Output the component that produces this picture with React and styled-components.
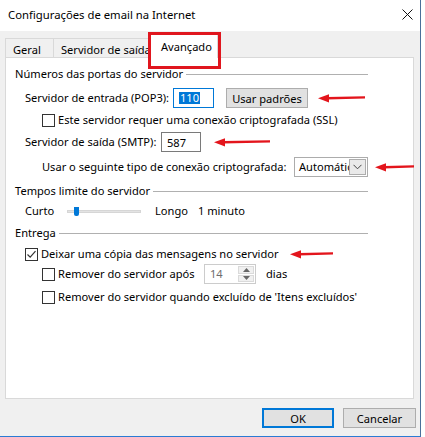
import React from "react"
import styled, { createGlobalStyle } from "styled-components"

const GlobalStyle = createGlobalStyle`
  html, body {
    margin: 0;
    padding: 0;
    background: #fff;
  }
  body {
    font-family: "Noto Sans", "Open Sans", sans-serif;
    font-size: 11.1px;
    color: #000;
  }
`

const RedArrow = ({ width, ml }) => (
  <ArrowSvg width={width} height="10" viewBox={`0 0 ${width} 10`} $ml={ml}>
    <polygon points={`9,4 ${width},3.2 ${width},5.6 9,6.6`} fill="#e3151c" />
    <polygon points="0,5.3 11,1.2 11,9.4" fill="#e3151c" />
  </ArrowSvg>
)

const Check = ({ checked }) => (
  <CheckBox>
    {checked && (
      <svg width="11" height="11" viewBox="0 0 11 11">
        <path d="M1.5 5.5 L4.2 8.2 L9.5 2.2" stroke="#333" strokeWidth="1.2" fill="none" />
      </svg>
    )}
  </CheckBox>
)

const SectionTitle = ({ children, top }) => (
  <Section $top={top}>
    <span>{children}</span>
    <Rule />
  </Section>
)

const App = () => {
  return (
    <>
      <GlobalStyle />
      <Window>
        <TitleBar>
          <Title>Configurações de email na Internet</Title>
          <svg width="11" height="11" viewBox="0 0 11 11">
            <path d="M0.5 0.5 L10.5 10.5 M10.5 0.5 L0.5 10.5" stroke="#111" strokeWidth="1" />
          </svg>
        </TitleBar>

        <TabStrip>
          <Tab $w={49} $first>Geral</Tab>
          <Tab $w={96}>Servidor de saída</Tab>
          <ActiveTab>
            Avançado
            <Highlight />
          </ActiveTab>
        </TabStrip>

        <Panel>
          <SectionTitle top={0}>Números das portas do servidor</SectionTitle>

          <Row $top={6} $indent={10}>
            <Label $w={148}>Servidor de entrada (POP3):</Label>
            <TextBox $w={41} $focus>
              <Selected>110</Selected>
            </TextBox>
            <Button $w={82} $ml={12}>Usar padrões</Button>
            <RedArrow width={47} ml={10} />
          </Row>

          <Row $top={4} $indent={27} $h={16}>
            <Check />
            <Label $ml={3}>Este servidor requer uma conexão criptografada (SSL)</Label>
          </Row>

          <Row $top={4} $indent={10}>
            <Label $w={136}>Servidor de saída (SMTP):</Label>
            <TextBox $w={40}>587</TextBox>
            <RedArrow width={56} ml={13} />
          </Row>

          <Row $top={5} $indent={27}>
            <Label $w={252}>Usar o seguinte tipo de conexão criptografada:</Label>
            <Select>
              <SelectText>Automático</SelectText>
              <SelectButton>
                <svg width="9" height="6" viewBox="0 0 9 6">
                  <path d="M0.5 0.8 L4.5 4.8 L8.5 0.8" stroke="#444" strokeWidth="1" fill="none" />
                </svg>
              </SelectButton>
            </Select>
            <RedArrow width={39} ml={7} />
          </Row>

          <SectionTitle top={6}>Tempos limite do servidor</SectionTitle>

          <Row $top={4} $indent={10} $h={16}>
            <Label $w={42}>Curto</Label>
            <Track>
              <Thumb />
            </Track>
            <Label $w={43} $ml={14}>Longo</Label>
            <Label>1 minuto</Label>
          </Row>

          <SectionTitle top={6}>Entrega</SectionTitle>

          <Row $top={5} $indent={10} $h={16}>
            <Check checked />
            <Label $w={249} $ml={3}>Deixar uma cópia das mensagens no servidor</Label>
            <RedArrow width={43} />
          </Row>

          <Row $top={2} $indent={27}>
            <Check />
            <Label $w={146} $ml={3}>Remover do servidor após</Label>
            <Spin>
              <SpinValue>14</SpinValue>
              <SpinButtons>
                <SpinHalf>
                  <svg width="7" height="4" viewBox="0 0 7 4">
                    <polygon points="3.5,0 7,4 0,4" fill="#666" />
                  </svg>
                </SpinHalf>
                <SpinHalf>
                  <svg width="7" height="4" viewBox="0 0 7 4">
                    <polygon points="0,0 7,0 3.5,4" fill="#666" />
                  </svg>
                </SpinHalf>
              </SpinButtons>
            </Spin>
            <Label $ml={10}>dias</Label>
          </Row>

          <Row $top={5} $indent={27} $h={16}>
            <Check />
            <Label $ml={3}>Remover do servidor quando excluído de 'Itens excluídos'</Label>
          </Row>
        </Panel>

        <Footer>
          <Button $w={72} $primary>OK</Button>
          <Button $w={73}>Cancelar</Button>
        </Footer>
      </Window>
    </>
  )
}

export default App

const Window = styled.div`
  width: 421px;
  height: 437px;
  box-sizing: border-box;
  background: #f0f0f0;
  border-right: 1px solid #4a6f9a;
  border-bottom: 1px solid #2b7bd3;
  display: flex;
  flex-direction: column;
`

const TitleBar = styled.div`
  height: 31px;
  flex-shrink: 0;
  background: #fff;
  display: flex;
  align-items: center;
  justify-content: space-between;
  padding: 0 7px 2px 8px;
  box-sizing: border-box;
`

const Title = styled.span`
  font-size: 11.3px;
  color: #000;
`

const TabStrip = styled.div`
  display: flex;
  align-items: flex-end;
  height: 25px;
  margin-top: 1px;
  padding-left: 5px;
  position: relative;
  z-index: 1;
`

const Tab = styled.div`
  width: ${({ $w }) => $w}px;
  height: 19px;
  box-sizing: border-box;
  border: 1px solid #d9d9d9;
  border-bottom: none;
  border-left-width: ${({ $first }) => ($first ? 1 : 0)}px;
  padding: 3px 0 0 7px;
  line-height: 16px;
  white-space: nowrap;
  overflow: hidden;
  background: #f0f0f0;
`

const ActiveTab = styled.div`
  position: relative;
  width: 70px;
  height: 25px;
  margin-left: -2px;
  margin-bottom: -1px;
  box-sizing: border-box;
  border: 1px solid #d9d9d9;
  border-bottom: none;
  background: #fff;
  padding: 5px 0 0 12px;
  line-height: 16px;
  white-space: nowrap;
`

const Highlight = styled.div`
  position: absolute;
  left: -1px;
  top: -2px;
  width: 73px;
  height: 37px;
  box-sizing: border-box;
  border: 3px solid #e0161e;
`

const Panel = styled.div`
  margin-left: 5px;
  width: 409px;
  height: 342px;
  flex-shrink: 0;
  box-sizing: border-box;
  border: 1px solid #d9d9d9;
  background: #fff;
  padding: 8px 0 0 9px;
  display: flex;
  flex-direction: column;
`

const Section = styled.div`
  display: flex;
  align-items: center;
  width: 353px;
  height: 16px;
  line-height: 16px;
  margin-top: ${({ $top }) => $top}px;
  white-space: nowrap;
`

const Rule = styled.div`
  flex: 1;
  height: 1px;
  margin-left: 3px;
  background: #b0b0b0;
`

const Row = styled.div`
  display: flex;
  align-items: center;
  height: ${({ $h }) => $h || 20}px;
  margin-top: ${({ $top }) => $top}px;
  padding-left: ${({ $indent }) => $indent}px;
  white-space: nowrap;
`

const Label = styled.span`
  display: inline-block;
  width: ${({ $w }) => ($w ? `${$w}px` : "auto")};
  margin-left: ${({ $ml }) => $ml || 0}px;
  flex-shrink: 0;
  line-height: 16px;
`

const TextBox = styled.div`
  width: ${({ $w }) => $w}px;
  height: 20px;
  box-sizing: border-box;
  border: 1px solid ${({ $focus }) => ($focus ? "#0078d7" : "#7a7a7a")};
  background: #fff;
  padding-left: 5px;
  display: flex;
  align-items: center;
  flex-shrink: 0;
`

const Selected = styled.span`
  background: #0078d7;
  color: #fff;
  line-height: 12px;
  padding: 0 1px;
`

const Button = styled.div`
  width: ${({ $w }) => $w}px;
  height: 20px;
  margin-left: ${({ $ml }) => $ml || 0}px;
  box-sizing: border-box;
  border: ${({ $primary }) => ($primary ? "2px solid #0078d7" : "1px solid #adadad")};
  background: #e1e1e1;
  display: flex;
  align-items: center;
  justify-content: center;
  flex-shrink: 0;
`

const ArrowSvg = styled.svg`
  margin-left: ${({ $ml }) => $ml || 0}px;
  flex-shrink: 0;
  overflow: visible;
`

const CheckBox = styled.div`
  width: 13px;
  height: 13px;
  box-sizing: border-box;
  border: 1px solid #333;
  background: #fff;
  display: flex;
  align-items: center;
  justify-content: center;
  flex-shrink: 0;
`

const Select = styled.div`
  width: 74px;
  height: 20px;
  box-sizing: border-box;
  border: 1px solid #acacac;
  background: #fff;
  display: flex;
  align-items: center;
  flex-shrink: 0;
  padding: 1px;
`

const SelectText = styled.span`
  flex: 1;
  overflow: hidden;
  padding-left: 3px;
  white-space: nowrap;
  line-height: 16px;
`

const SelectButton = styled.div`
  width: 17px;
  height: 16px;
  box-sizing: border-box;
  border: 1px solid #adadad;
  background: #eaeaea;
  display: flex;
  align-items: center;
  justify-content: center;
`

const Track = styled.div`
  position: relative;
  width: 74px;
  height: 3px;
  background: #e3e3e3;
  border: 1px solid #d6d6d6;
  box-sizing: border-box;
  flex-shrink: 0;
`

const Thumb = styled.div`
  position: absolute;
  left: 6px;
  top: -4px;
  width: 5px;
  height: 9px;
  background: #0078d7;
  border-radius: 0 0 2px 2px;
`

const Spin = styled.div`
  width: 52px;
  height: 20px;
  box-sizing: border-box;
  border: 1px solid #cccccc;
  background: #fff;
  display: flex;
  flex-shrink: 0;
`

const SpinValue = styled.span`
  flex: 1;
  padding-left: 5px;
  color: #6d6d6d;
  line-height: 18px;
`

const SpinButtons = styled.div`
  width: 16px;
  display: flex;
  flex-direction: column;
  padding: 1px;
  gap: 1px;
`

const SpinHalf = styled.div`
  flex: 1;
  background: #f0f0f0;
  border: 1px solid #dadada;
  display: flex;
  align-items: center;
  justify-content: center;
`

const Footer = styled.div`
  display: flex;
  justify-content: flex-end;
  gap: 9px;
  margin-top: 9px;
  padding-right: 4px;
`
